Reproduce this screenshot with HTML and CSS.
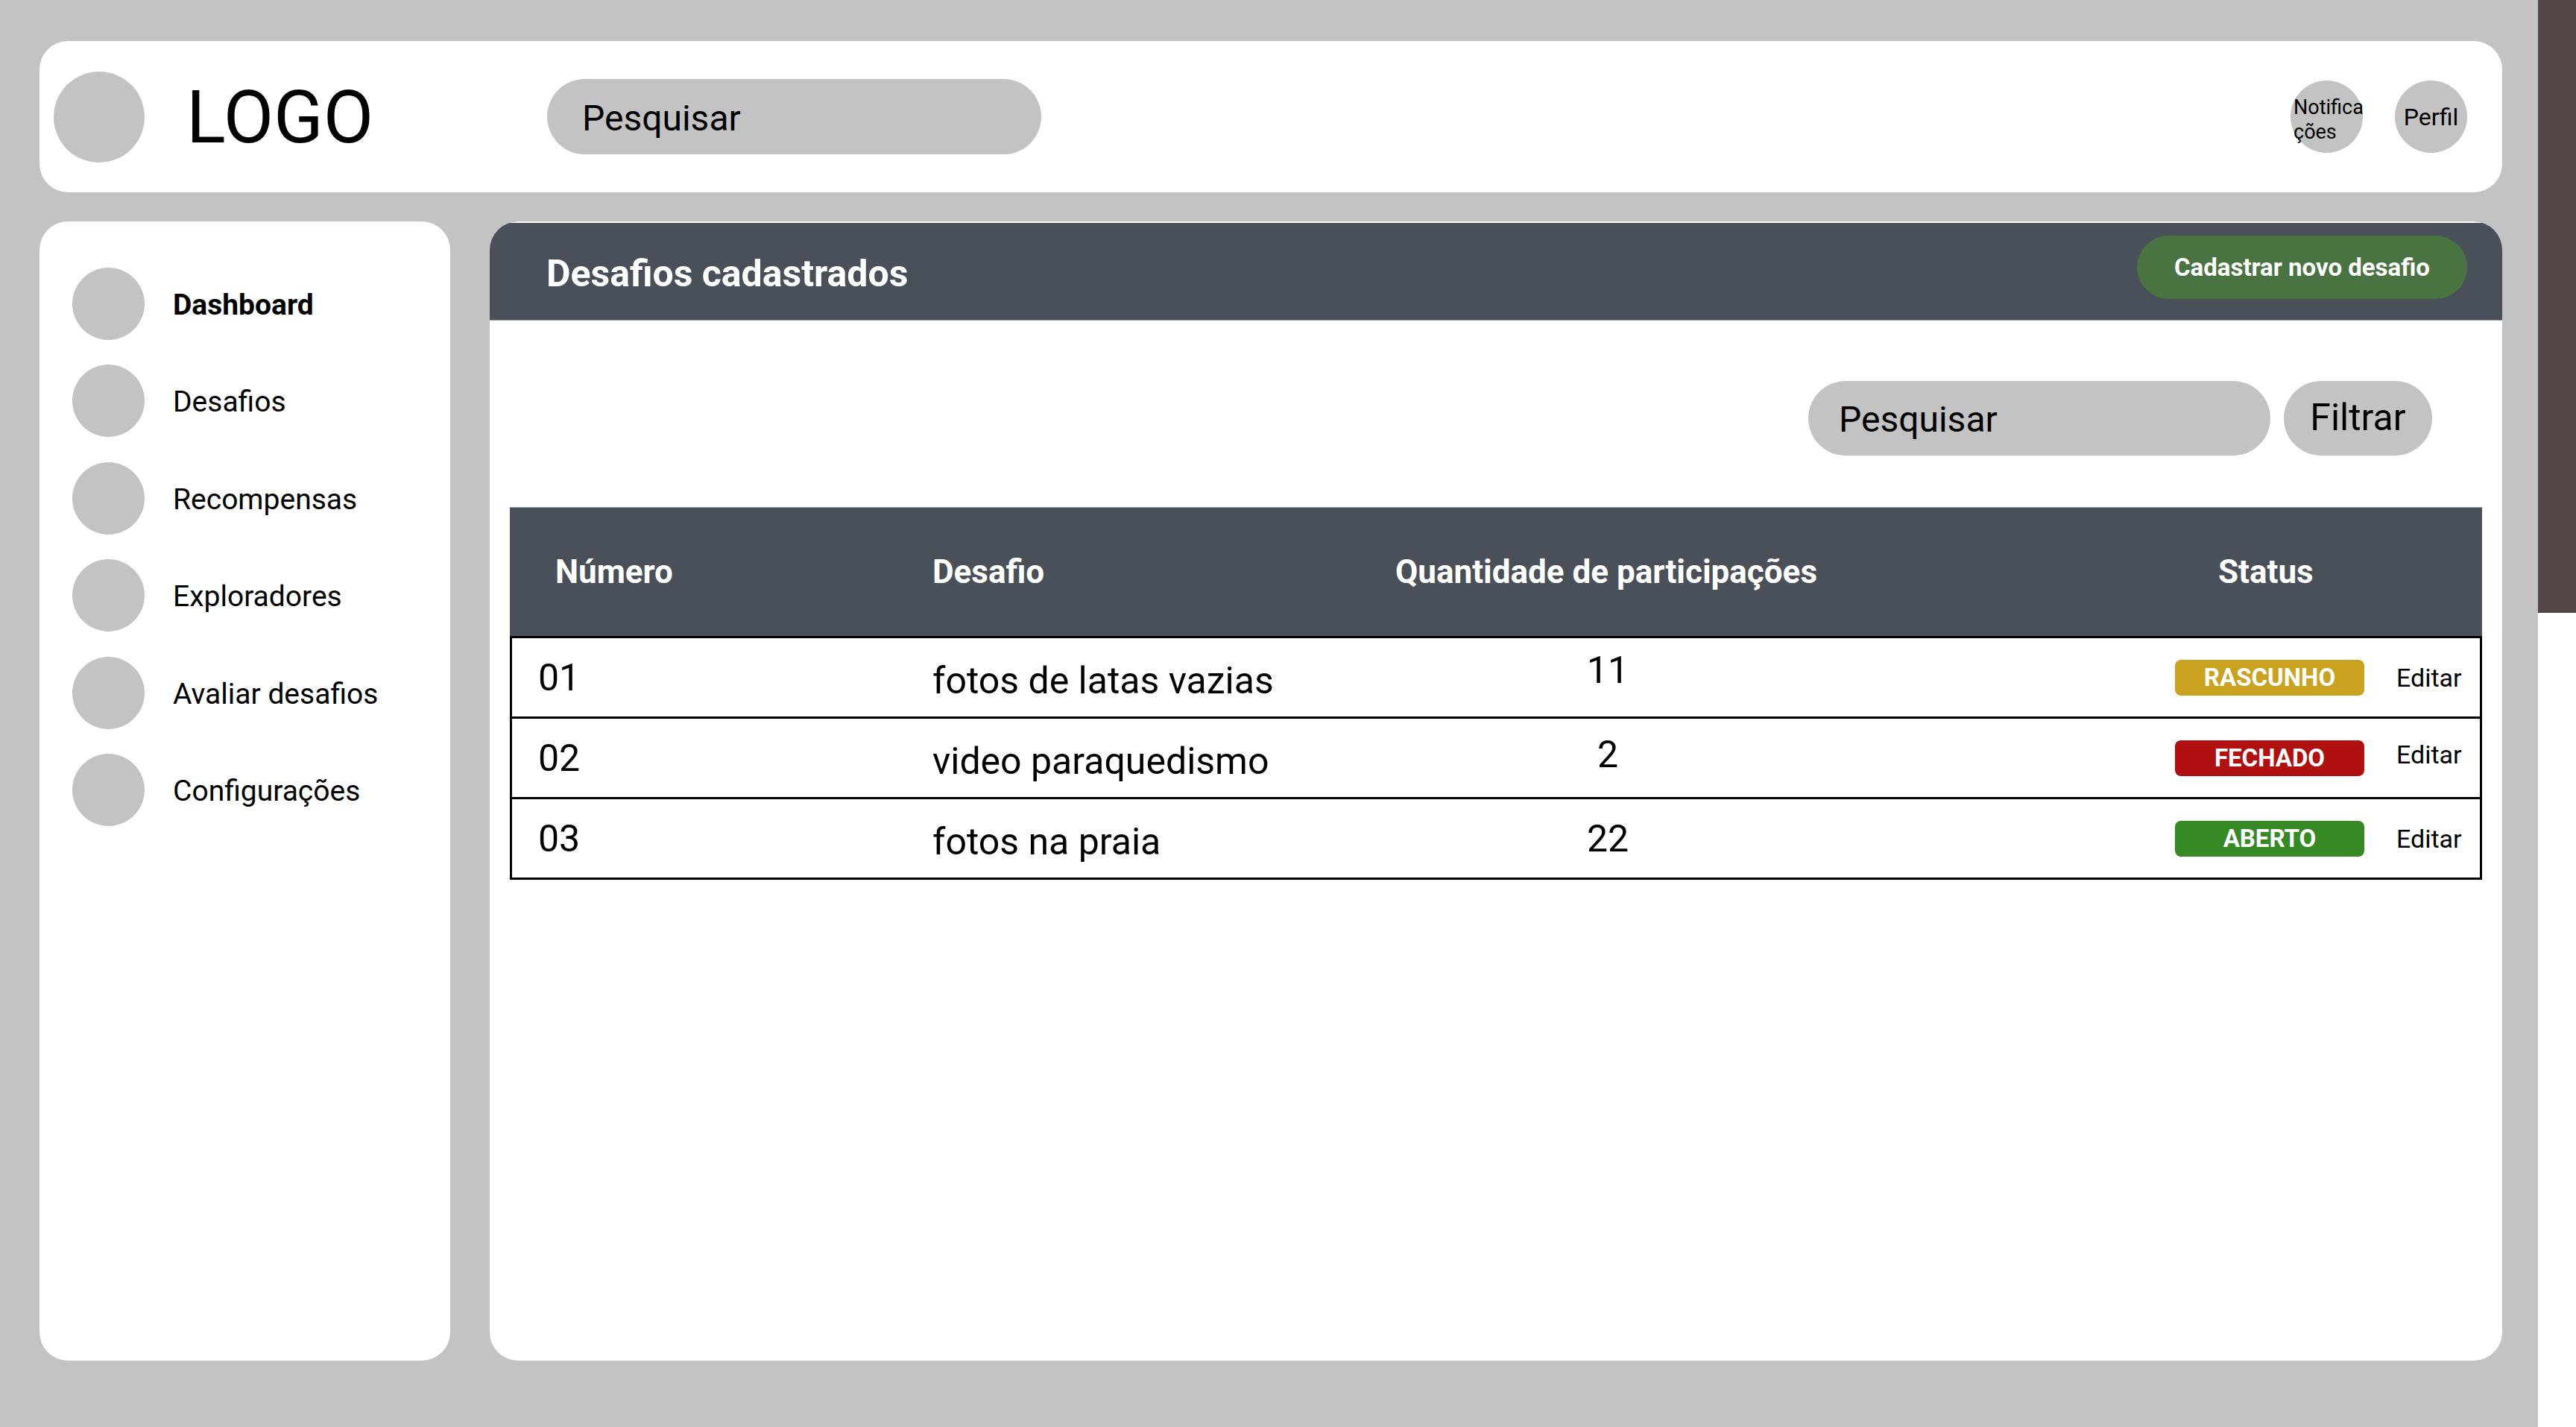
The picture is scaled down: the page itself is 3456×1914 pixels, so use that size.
FILE: index.html
```html
<!DOCTYPE html>
<html lang="pt-BR">
<head>
<meta charset="utf-8">
<title>Desafios cadastrados</title>
<link rel="stylesheet" href="styles.css">
</head>
<body>
<div class="page">
  <header class="topbar">
    <div class="brand">
      <div class="logo-mark"></div>
      <div class="logo-text">LOGO</div>
    </div>
    <div class="top-search">Pesquisar</div>
    <div class="top-actions">
      <div class="circle-btn notif">Notifica<wbr>ções</div>
      <div class="circle-btn perfil">Perfil</div>
    </div>
  </header>

  <div class="body-row">
    <nav class="sidebar">
      <div class="nav-item active"><span class="nav-dot"></span><span class="nav-label">Dashboard</span></div>
      <div class="nav-item"><span class="nav-dot"></span><span class="nav-label">Desafios</span></div>
      <div class="nav-item"><span class="nav-dot"></span><span class="nav-label">Recompensas</span></div>
      <div class="nav-item"><span class="nav-dot"></span><span class="nav-label">Exploradores</span></div>
      <div class="nav-item"><span class="nav-dot"></span><span class="nav-label">Avaliar desafios</span></div>
      <div class="nav-item"><span class="nav-dot"></span><span class="nav-label">Configurações</span></div>
    </nav>

    <main class="main-card">
      <div class="card-head">
        <h1 class="card-title">Desafios cadastrados</h1>
        <div class="btn-new">Cadastrar novo desafio</div>
      </div>

      <div class="tools">
        <div class="search-pill">Pesquisar</div>
        <div class="filter-pill">Filtrar</div>
      </div>

      <div class="table">
        <div class="thead">
          <div class="th th-num">Número</div>
          <div class="th th-name">Desafio</div>
          <div class="th th-qty">Quantidade de participações</div>
          <div class="th th-status">Status</div>
        </div>
        <div class="tr">
          <div class="td td-num">01</div>
          <div class="td td-name">fotos de latas vazias</div>
          <div class="td td-qty"><span class="qty qty-high">11</span></div>
          <div class="td td-status"><span class="badge draft">RASCUNHO</span><span class="edit">Editar</span></div>
        </div>
        <div class="tr">
          <div class="td td-num">02</div>
          <div class="td td-name">video paraquedismo</div>
          <div class="td td-qty"><span class="qty qty-mid">2</span></div>
          <div class="td td-status"><span class="badge closed">FECHADO</span><span class="edit edit-mid">Editar</span></div>
        </div>
        <div class="tr">
          <div class="td td-num">03</div>
          <div class="td td-name">fotos na praia</div>
          <div class="td td-qty"><span class="qty">22</span></div>
          <div class="td td-status"><span class="badge open">ABERTO</span><span class="edit">Editar</span></div>
        </div>
      </div>
    </main>
  </div>
</div>
<div class="scrollbar"><div class="scroll-thumb"></div></div>
</body>
</html>
```

FILE: styles.css
```css
html, body {
  margin: 0;
  padding: 0;
  height: 1914px;
}

body {
  display: flex;
  width: 3456px;
  overflow: hidden;
  font-family: Roboto, "Noto Sans", "Liberation Sans", sans-serif;
  color: #000;
}

.page {
  width: 3405px;
  flex: none;
  background: #c3c3c3;
  padding: 55px 48px 0 53px;
  box-sizing: border-box;
}

/* ---------- top bar ---------- */
.topbar {
  height: 203px;
  background: #fff;
  border-radius: 38px;
  display: flex;
  align-items: center;
  padding: 0 47px 0 19px;
}

.brand {
  width: 662px;
  flex: none;
  display: flex;
  align-items: center;
}

.logo-mark {
  width: 122px;
  height: 122px;
  border-radius: 50%;
  background: #c3c3c3;
  flex: none;
}

.logo-text {
  font-size: 98px;
  line-height: 1;
  margin-left: 56px;
  margin-top: 2px;
}

.top-search {
  width: 663px;
  height: 101px;
  box-sizing: border-box;
  border-radius: 51px;
  background: #c3c3c3;
  display: flex;
  align-items: center;
  padding-left: 47px;
  font-size: 48px;
  padding-top: 4px;
}

.top-actions {
  margin-left: auto;
  display: flex;
  gap: 43px;
}

.circle-btn {
  width: 97px;
  height: 97px;
  border-radius: 50%;
  background: #c3c3c3;
  display: flex;
  align-items: center;
  box-sizing: border-box;
}

.notif {
  font-size: 27px;
  line-height: 33px;
  padding-left: 4px;
  padding-top: 8px;
}

.perfil {
  font-size: 32px;
  justify-content: center;
}

/* ---------- body ---------- */
.body-row {
  margin-top: 39px;
  height: 1528px;
  display: flex;
  gap: 53px;
}

.sidebar {
  width: 551px;
  flex: none;
  background: #fff;
  border-radius: 38px;
  box-sizing: border-box;
  padding: 62px 0 0 44px;
  display: flex;
  flex-direction: column;
  gap: 33.4px;
}

.nav-item {
  display: flex;
  align-items: center;
  gap: 38px;
  font-size: 39px;
}

.nav-label {
  padding-top: 3px;
}

.nav-dot {
  width: 97px;
  height: 97px;
  border-radius: 50%;
  background: #c3c3c3;
  flex: none;
}

.nav-item.active .nav-label {
  font-weight: 700;
}

/* ---------- main card ---------- */
.main-card {
  flex: 1;
  background: #fff;
  border-radius: 38px;
  overflow: hidden;
  display: flex;
  flex-direction: column;
}

.card-head {
  height: 133px;
  flex: none;
  background: #4a505a;
  border-top: 2px solid #fff;
  box-sizing: border-box;
  border-bottom: 1px solid #9aa0a8;
  display: flex;
  align-items: center;
  padding: 0 47px 0 76px;
}

.card-title {
  margin: 0;
  font-size: 50px;
  font-weight: 700;
  color: #fff;
  padding-top: 6px;
}

.btn-new {
  margin-left: auto;
  height: 85px;
  padding: 0 50px;
  border-radius: 43px;
  background: #497340;
  color: #fff;
  font-size: 33px;
  font-weight: 700;
  display: flex;
  align-items: center;
  margin-bottom: 12px;
}

.tools {
  display: flex;
  justify-content: flex-end;
  gap: 18px;
  padding: 81px 94px 0 0;
}

.search-pill {
  width: 620px;
  height: 100px;
  box-sizing: border-box;
  border-radius: 50px;
  background: #c3c3c3;
  display: flex;
  align-items: center;
  padding-left: 41px;
  font-size: 48px;
  padding-top: 2px;
}

.filter-pill {
  width: 199px;
  height: 100px;
  border-radius: 50px;
  background: #c3c3c3;
  display: flex;
  align-items: center;
  justify-content: center;
  font-size: 50px;
  padding-bottom: 2px;
  box-sizing: border-box;
}

/* ---------- table ---------- */
.table {
  margin: 69px 27px 0 27px;
}

.thead {
  height: 176px;
  box-sizing: border-box;
  background: #4a505a;
  border-top: 1px solid #9aa0a8;
  border-bottom: 3px solid #000;
  display: grid;
  grid-template-columns: 567px 621px 1019px 1fr;
  align-items: center;
  color: #fff;
  font-size: 44px;
  font-weight: 700;
}

.th-num { padding-left: 61px; }
.th-status { padding-left: 85px; }

.tr {
  height: 108px;
  box-sizing: border-box;
  border-left: 3px solid #000;
  border-right: 3px solid #000;
  border-bottom: 3px solid #000;
  display: grid;
  grid-template-columns: 564px 621px 1019px 1fr;
  align-items: center;
  font-size: 50px;
}

.td-num { padding-left: 35px; }
.td-name { padding-top: 8px; }

.td-qty { padding-left: 245px; }
.qty {
  display: inline-block;
  width: 80px;
  text-align: center;
}
.qty-high { transform: translateY(-10px); }
.qty-mid { transform: translateY(-5px); }

.td-status {
  padding-left: 27px;
  display: flex;
  align-items: center;
  gap: 43px;
}

.badge {
  width: 254px;
  height: 48px;
  border-radius: 8px;
  color: #fff;
  font-size: 33px;
  font-weight: 700;
  display: flex;
  align-items: center;
  justify-content: center;
}

.badge.draft { background: #c9a21f; }
.badge.closed { background: #b01010; }
.badge.open { background: #358a25; }

.edit {
  font-size: 34px;
}
.edit-mid { transform: translateY(-5px); }

/* ---------- right strip ---------- */
.scrollbar {
  width: 51px;
  flex: none;
  background: #fff;
}

.scroll-thumb {
  height: 822px;
  background: #544646;
}
```
